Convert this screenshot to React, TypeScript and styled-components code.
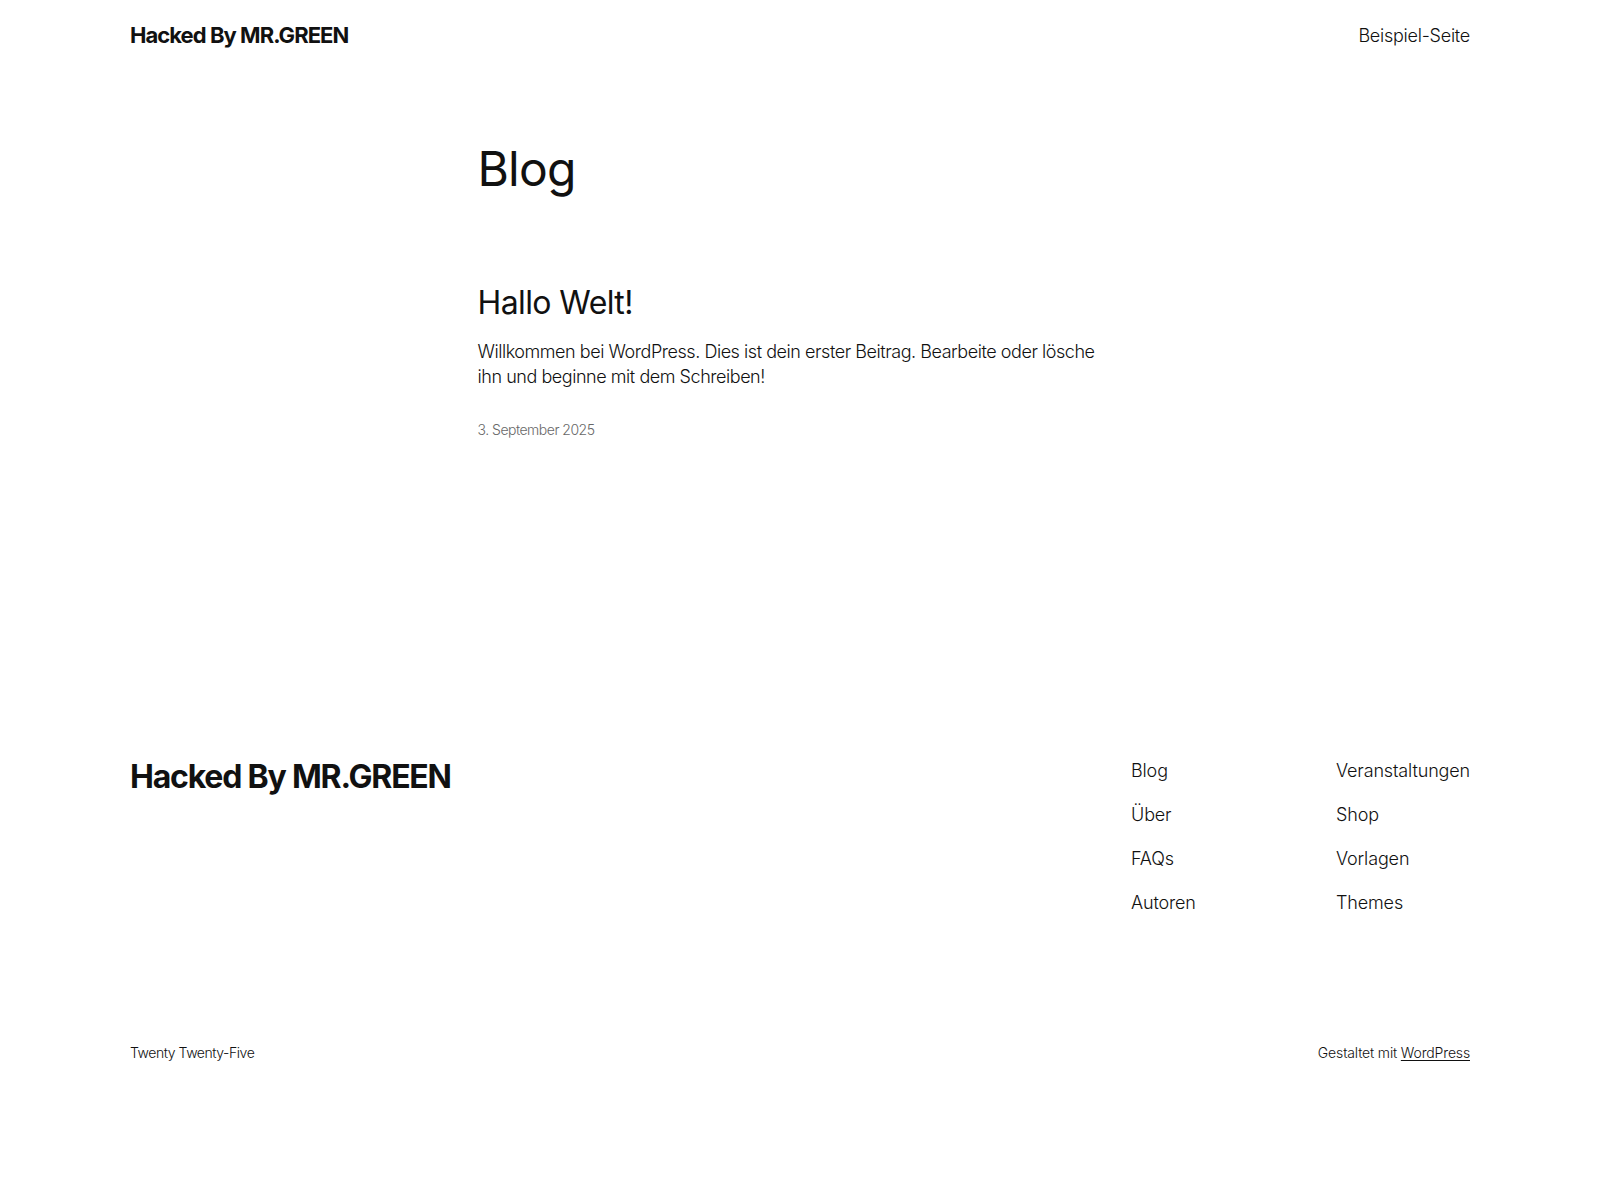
import React from "react";
import styled, { createGlobalStyle } from "styled-components";

const GlobalStyle = createGlobalStyle`
  * { box-sizing: border-box; }
  html, body { margin: 0; padding: 0; background: #ffffff; }
  body {
    font-family: Inter, "Noto Sans", "Liberation Sans", sans-serif;
    color: #111111;
    font-weight: 300;
    letter-spacing: -0.1px;
    -webkit-font-smoothing: antialiased;
  }
  a { color: inherit; text-decoration: none; }
`;

const Page = styled.div`
  width: 1600px;
  min-height: 1200px;
  display: flex;
  flex-direction: column;
`;

const Wide = styled.div`
  width: 1340px;
  margin: 0 auto;
`;

const Header = styled(Wide)`
  display: flex;
  align-items: center;
  justify-content: space-between;
  padding: 21px 0 19px;
`;

const SiteTitle = styled.a<{ $size: number }>`
  font-size: ${(p) => p.$size}px;
  font-weight: 700;
  letter-spacing: ${(p) => (p.$size > 25 ? "-1.2px" : "-0.95px")};
  line-height: 1.3;
`;

const HeaderNav = styled.nav`
  font-size: 18px;
  font-weight: 300;
  line-height: 1.4;
  letter-spacing: -0.25px;
`;

const Main = styled.main`
  width: 645px;
  margin: 0 auto;
  padding-top: 73px;
  min-height: 680px;
`;

const PageHeading = styled.h1`
  margin: 0;
  font-size: 48px;
  font-weight: 400;
  line-height: 1.125;
  letter-spacing: -0.8px;
`;

const Post = styled.article`
  margin-top: 89px;
`;

const PostTitle = styled.h2`
  margin: 0;
  font-size: 32px;
  font-weight: 400;
  line-height: 1.125;
  letter-spacing: -0.6px;
`;

const Excerpt = styled.p`
  margin: 18px 0 0;
  font-size: 18px;
  line-height: 1.4;
  font-weight: 300;
  letter-spacing: -0.45px;
`;

const PostDate = styled.time`
  display: block;
  margin-top: 32px;
  font-size: 14px;
  color: #686868;
  font-weight: 300;
  letter-spacing: -0.5px;
`;

const Footer = styled(Wide)`
  display: flex;
  flex-direction: column;
`;

const FooterTop = styled.div`
  display: flex;
  justify-content: space-between;
  align-items: flex-start;
  padding-top: 7px;
`;

const FooterNav = styled.nav`
  display: grid;
  grid-template-columns: 205px auto;
  padding-top: 2px;
`;

const NavColumn = styled.ul`
  list-style: none;
  margin: 0;
  padding: 0;
  display: flex;
  flex-direction: column;
  gap: 19px;
`;

const NavItem = styled.li`
  font-size: 18px;
  font-weight: 300;
  line-height: 25px;
  letter-spacing: -0.15px;
`;

const FooterBottom = styled.div`
  display: flex;
  justify-content: space-between;
  align-items: center;
  margin-top: 129px;
  font-size: 14px;
  font-weight: 300;
`;

const FooterNote = styled.span<{ $spacing: number }>`
  letter-spacing: ${(p) => p.$spacing}px;
`;

const Underlined = styled.a`
  text-decoration: underline;
  text-underline-offset: 2px;
`;

const leftLinks = ["Blog", "Über", "FAQs", "Autoren"];
const rightLinks = ["Veranstaltungen", "Shop", "Vorlagen", "Themes"];

export default function App() {
  return (
    <Page>
      <GlobalStyle />
      <Header as="header">
        <SiteTitle $size={22} href="#">
          Hacked By MR.GREEN
        </SiteTitle>
        <HeaderNav>
          <a href="#">Beispiel-Seite</a>
        </HeaderNav>
      </Header>

      <Main>
        <PageHeading>Blog</PageHeading>
        <Post>
          <PostTitle>Hallo Welt!</PostTitle>
          <Excerpt>
            Willkommen bei WordPress. Dies ist dein erster Beitrag. Bearbeite
            oder lösche ihn und beginne mit dem Schreiben!
          </Excerpt>
          <PostDate>3. September 2025</PostDate>
        </Post>
      </Main>

      <Footer as="footer">
        <FooterTop>
          <SiteTitle $size={32} href="#">
            Hacked By MR.GREEN
          </SiteTitle>
          <FooterNav>
            <NavColumn>
              {leftLinks.map((l) => (
                <NavItem key={l}>
                  <a href="#">{l}</a>
                </NavItem>
              ))}
            </NavColumn>
            <NavColumn>
              {rightLinks.map((l) => (
                <NavItem key={l}>
                  <a href="#">{l}</a>
                </NavItem>
              ))}
            </NavColumn>
          </FooterNav>
        </FooterTop>
        <FooterBottom>
          <FooterNote $spacing={-0.45}>Twenty Twenty-Five</FooterNote>
          <FooterNote $spacing={-0.15}>
            Gestaltet mit <Underlined href="#">WordPress</Underlined>
          </FooterNote>
        </FooterBottom>
      </Footer>
    </Page>
  );
}
